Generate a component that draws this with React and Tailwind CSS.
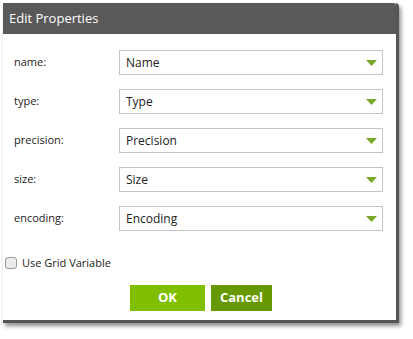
const FIELDS = [
  { label: "name:", value: "Name" },
  { label: "type:", value: "Type" },
  { label: "precision:", value: "Precision" },
  { label: "size:", value: "Size" },
  { label: "encoding:", value: "Encoding" },
];

function Caret() {
  return (
    <svg width="11" height="6" viewBox="0 0 11 6" className="shrink-0">
      <path d="M0 0 H11 L5.5 6 Z" fill="#78a82a" />
    </svg>
  );
}

export default function App() {
  return (
    <div className="w-[413px] h-[339px] bg-white pl-[3px] pt-[3px]" style={{ fontFamily: '"Open Sans", "Liberation Sans", sans-serif' }}>
      <div className="w-[396px] h-[320px] bg-white flex flex-col border-r-[3px] border-b-[3px] border-[#555] shadow-[2px_3px_4px_rgba(0,0,0,0.45)] rounded-tr-[4px]">
        <div className="h-[31px] bg-[#595959] flex items-center pl-[6px] text-white text-[13px] rounded-tr-[3px]">
          Edit Properties
        </div>
        <div className="flex flex-col gap-[14px] pt-[16px] pl-[11px] pr-[13px]">
          {FIELDS.map((f) => (
            <div key={f.label} className="flex items-center">
              <span className="w-[105px] text-[11px] text-[#222]">{f.label}</span>
              <div className="flex-1 h-[25px] border border-[#c4c4c4] flex items-center justify-between pl-[6px] pr-[5px] text-[12px] text-[#222]">
                <span>{f.value}</span>
                <Caret />
              </div>
            </div>
          ))}
        </div>
        <label className="flex items-center gap-[5px] mt-[24px] pl-[2px] text-[11px] text-[#222]">
          <span className="w-[12px] h-[12px] rounded-[3px] border border-[#9a9a9a] bg-[#ececec]" />
          Use Grid Variable
        </label>
        <div className="flex justify-center gap-[6px] mt-[13px] pl-[3px]">
          <button className="w-[75px] h-[26px] bg-[#7fbf00] text-white font-bold text-[13px]">OK</button>
          <button className="w-[61px] h-[26px] bg-[#669900] text-white font-bold text-[13px]">Cancel</button>
        </div>
      </div>
    </div>
  );
}
